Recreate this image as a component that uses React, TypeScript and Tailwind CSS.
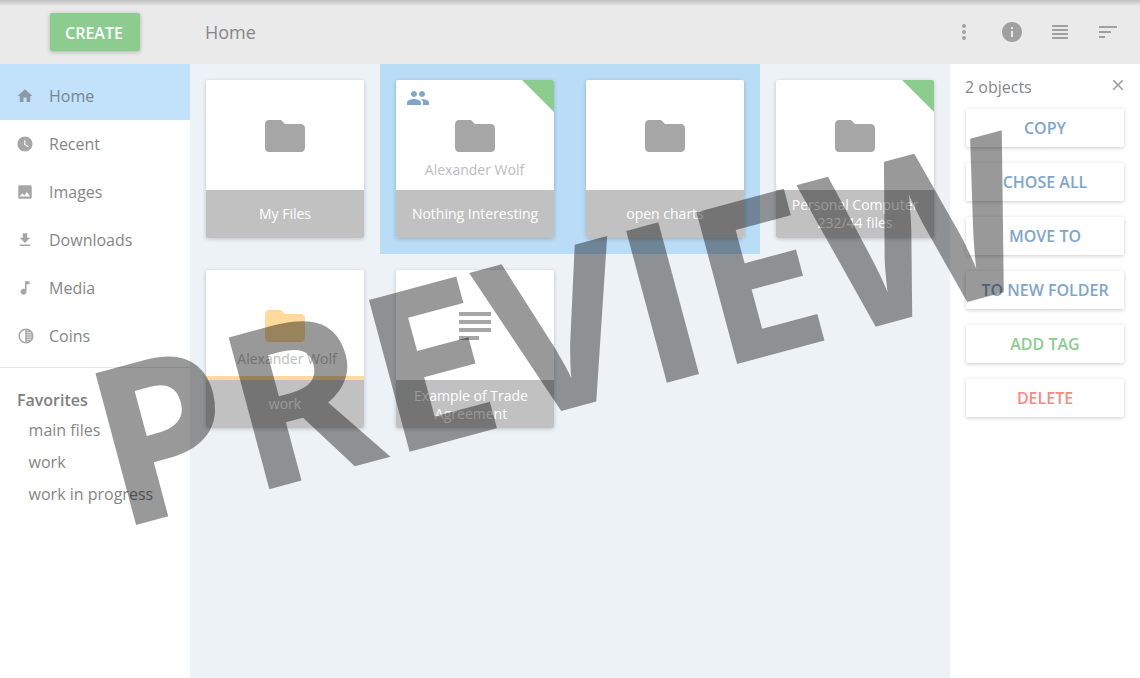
import type { ReactNode } from "react";
import {
  MdHome, MdWatchLater, MdImage, MdFileDownload, MdMusicNote, MdTonality,
  MdFolder, MdPeople, MdMoreVert, MdInfo, MdClose, MdSort,
} from "react-icons/md";

const nav = [
  { label: "Home", icon: <MdHome size={18} />, active: true },
  { label: "Recent", icon: <MdWatchLater size={18} /> },
  { label: "Images", icon: <MdImage size={18} /> },
  { label: "Downloads", icon: <MdFileDownload size={18} /> },
  { label: "Media", icon: <MdMusicNote size={18} /> },
  { label: "Coins", icon: <MdTonality size={18} className="ml-px" /> },
];

const favorites = ["main files", "work", "work in progress"];

type Item = {
  title: string;
  owner?: string;
  selected?: boolean;
  tagged?: boolean;
  shared?: boolean;
  highlight?: boolean;
  doc?: boolean;
};

const items: Item[] = [
  { title: "My Files" },
  { title: "Nothing Interesting", owner: "Alexander Wolf", selected: true, tagged: true, shared: true },
  { title: "open charts", selected: true },
  { title: "Personal Computer 232/44 files", tagged: true },
  { title: "work", owner: "Alexander Wolf", highlight: true },
  { title: "Example of Trade Agreement", doc: true },
];

const actions = [
  { label: "COPY", color: "text-[#7fa6ca]" },
  { label: "CHOSE ALL", color: "text-[#7fa6ca]" },
  { label: "MOVE TO", color: "text-[#7fa6ca]" },
  { label: "TO NEW FOLDER", color: "text-[#7fa6ca]" },
  { label: "ADD TAG", color: "text-[#8ccc8f]" },
  { label: "DELETE", color: "text-[#f88a82]" },
];

function DocIcon() {
  return (
    <svg width="32" height="28" viewBox="0 0 32 28" fill="#a6a6a6">
      <path d="M0 0h32v4H0zM0 8h32v4H0zM0 16h32v4H0zM0 24h20v4H0z" />
    </svg>
  );
}

function RowsIcon() {
  return (
    <svg width="16" height="14" viewBox="0 0 16 14" fill="currentColor">
      <path d="M0 0h16v2H0zM0 4h16v2H0zM0 8h16v2H0zM0 12h16v2H0z" />
    </svg>
  );
}

function Tile({ item }: { item: Item }) {
  return (
    <div className={`h-[190px] w-[190px] p-4 ${item.selected ? "bg-[#b9dcf7]" : ""}`}>
      <div className="relative flex h-[158px] w-[158px] flex-col overflow-hidden rounded-[2px] bg-white shadow-[0_1px_4px_rgba(0,0,0,0.2)]">
        {item.shared && <MdPeople size={24} className="absolute left-[10px] top-[6px] text-[#7fa6ca]" />}
        {item.tagged && (
          <svg className="absolute right-0 top-0" width="32" height="32" viewBox="0 0 32 32" fill="#8ccc8f">
            <path d="M0 0h32v32z" />
          </svg>
        )}
        <div className={`flex h-[110px] shrink-0 flex-col items-center ${item.highlight ? "border-b-4 border-[#ffda9b]" : ""}`}>
          {item.doc ? (
            <div className="pt-[42px]"><DocIcon /></div>
          ) : (
            <MdFolder size={48} className={`mt-8 shrink-0 ${item.highlight ? "text-[#ffda9b]" : "text-[#a6a6a6]"}`} />
          )}
          {item.owner && (
            <span className={`text-sm leading-5 text-[#bdbdbd] ${item.highlight ? "-mt-px pl-1" : "pr-px"}`}>{item.owner}</span>
          )}
        </div>
        <div className={`flex h-12 items-center justify-center bg-[#c1c1c1] text-center text-sm leading-[18px] text-white ${item.doc ? "pl-2 pr-4 pt-0.5" : "px-3"}`}>
          {item.title}
        </div>
      </div>
    </div>
  );
}

function HeaderIcon({ children }: { children: ReactNode }) {
  return <div className="flex h-12 w-12 items-center justify-center">{children}</div>;
}

export default function App() {
  return (
    <div className="relative flex h-[678px] w-[1140px] flex-col overflow-hidden bg-white font-['Open_Sans',sans-serif] text-base text-[#868686]">
      <header className="flex h-16 shrink-0 items-center bg-[#eaeaea] bg-linear-to-b from-[#c0c0c0] to-[#eaeaea] to-[6px]">
        <div className="flex w-[190px] justify-center">
          <button className="h-[38px] w-[90px] rounded-[2px] bg-[#8ccc8f] pr-0.5 pt-0.5 font-semibold leading-none text-white shadow-[0_1px_4px_rgba(0,0,0,0.25)]">
            CREATE
          </button>
        </div>
        <h1 className="flex-1 pl-[15px] text-lg">Home</h1>
        <div className="flex pr-2 text-[#a0a0a0]">
          <HeaderIcon><MdMoreVert size={24} /></HeaderIcon>
          <HeaderIcon><MdInfo size={24} /></HeaderIcon>
          <HeaderIcon><RowsIcon /></HeaderIcon>
          <HeaderIcon><MdSort size={24} /></HeaderIcon>
        </div>
      </header>
      <div className="flex min-h-0 flex-1">
        <aside className="w-[190px] shrink-0">
          <nav className="h-[304px] border-b border-[#e6e6e6]">
            {nav.map((n) => (
              <div
                key={n.label}
                className={`flex items-center pl-4 ${n.active ? "h-14 bg-[#c2e1fa] pt-2 text-[#78848e]" : "h-12"}`}
              >
                <span className={`w-[33px] ${n.active ? "text-[#8d9aa5]" : "text-[#a6a6a6]"}`}>{n.icon}</span>
                <span>{n.label}</span>
              </div>
            ))}
          </nav>
          <h2 className="pl-[17px] pt-5 font-semibold leading-6 text-[#808080]">Favorites</h2>
          <ul className="pl-[28.6px] pt-0.5">
            {favorites.map((f) => (
              <li key={f} className="h-8 leading-8">{f}</li>
            ))}
          </ul>
        </aside>
        <main className="flex w-[760px] shrink-0 flex-wrap content-start bg-[#edf2f6]">
          {items.map((item) => <Tile key={item.title} item={item} />)}
        </main>
        <aside className="flex w-[190px] flex-col px-4">
          <div className="flex h-[45px] items-center justify-between">
            <span className="-ml-px">2 objects</span>
            <MdClose size={18} className="-mr-[3px] -mt-1 text-[#999]" />
          </div>
          <div className="flex flex-col gap-4">
            {actions.map((a) => (
              <button
                key={a.label}
                className={`h-[38px] rounded-[2px] bg-white font-semibold leading-none shadow-[0_1px_4px_rgba(0,0,0,0.2)] ${a.color}`}
              >
                {a.label}
              </button>
            ))}
          </div>
        </aside>
      </div>
      <div className="pointer-events-none absolute left-[117px] top-[335.4px] origin-[0_195.4px] -rotate-15 whitespace-nowrap text-[220px] font-bold leading-none text-black/40">
        PREVIEW
      </div>
    </div>
  );
}
